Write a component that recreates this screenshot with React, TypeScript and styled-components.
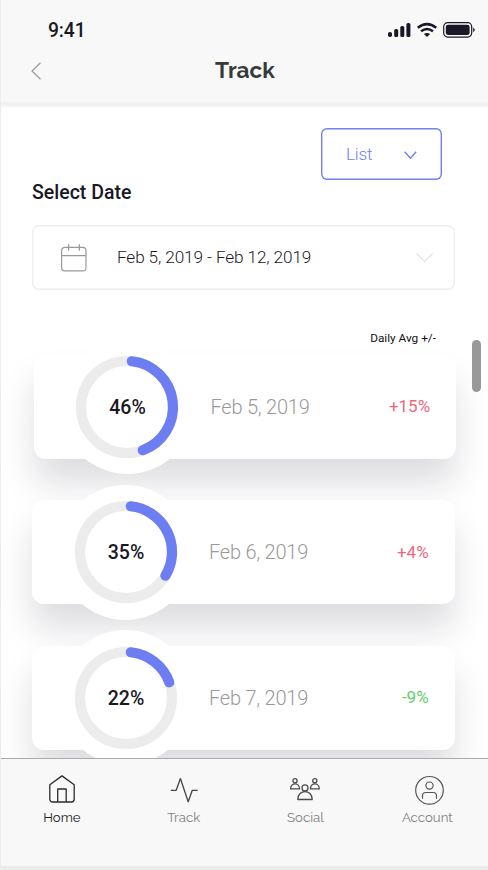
import React from "react";
import styled, { createGlobalStyle } from "styled-components";

const Global = createGlobalStyle`
  * { box-sizing: border-box; }
  body { margin: 0; background: #ececec; font-family: Roboto, sans-serif; color: #1a1827; }
  svg { display: block; overflow: visible; flex: none; }
`;

const Screen = styled.div`
  position: relative;
  display: flex;
  flex-direction: column;
  width: 488px;
  height: 870px;
  padding: 0 0 4px 1px;
  overflow: hidden;
  background: #ececec;
`;

const Header = styled.header`
  flex: none;
  height: 102px;
  background: #f8f8f8;
`;

const HeaderEdge = styled.div`
  flex: none;
  height: 6px;
  background: linear-gradient(#f2f2f2 0 55%, #fff);
`;

const StatusBar = styled.div`
  display: flex;
  justify-content: space-between;
  align-items: center;
  height: 60px;
  padding: 0 13px 0 47px;
`;

const Clock = styled.span`
  padding-top: 2px;
  font-size: 19.3px;
  font-weight: 500;
  letter-spacing: -0.1px;
  line-height: 24px;
`;

const StatusIcons = styled.div`
  display: flex;
  align-items: center;
`;

const TitleBar = styled.div`
  display: grid;
  grid-template-columns: 60px 1fr 60px;
  grid-template-rows: 21px;
  align-items: center;
  height: 21px;
`;

const BackButton = styled.div`
  padding-left: 30px;
`;

const Title = styled.h1`
  margin: -1px 0 0 1px;
  text-align: center;
  font: 700 22.6px/24px Raleway, Lato, sans-serif;
  color: #373a38;
`;

const Main = styled.main`
  flex: 1;
  min-height: 0;
  overflow: hidden;
  padding: 19.5px 0 0 31px;
  background: #fff;
`;

const ViewSelect = styled.div`
  display: flex;
  align-items: center;
  justify-content: space-between;
  width: 121px;
  height: 52.5px;
  margin-left: 289px;
  padding: 0 25px 0 25px;
  box-shadow: inset 0 0 0 1.4px #7080f0;
  border-radius: 6px;
  color: #7080f0;
  font-size: 17.2px;
  letter-spacing: -0.2px;
  font-weight: 300;
`;

const SelectChevron = styled.div`
  padding-top: 2px;
`;

const SectionLabel = styled.h2`
  margin: 1px 0 20px;
  font-size: 19.5px;
  font-weight: 500;
  line-height: 24px;
`;

const DateField = styled.div`
  display: flex;
  align-items: center;
  width: 423px;
  height: 65px;
  padding: 0 22.5px 0 29px;
  box-shadow: inset 0 0 0 1.4px #eee;
  border-radius: 7px;
`;

const DateText = styled.span`
  flex: 1;
  margin: -2px 0 0 30px;
  font-size: 17.2px;
  letter-spacing: -0.12px;
  font-weight: 300;
`;

const ColumnLabel = styled.div`
  width: 404px;
  height: 16px;
  margin-top: 40px;
  text-align: right;
  font-size: 11.8px;
  line-height: 16px;
  color: #111;
`;

const CardList = styled.div`
  display: flex;
  flex-direction: column;
  gap: 41.5px;
  padding-top: 8.6px;
`;

const Card = styled.article<{ $shift?: number }>`
  display: flex;
  align-items: center;
  width: 422.6px;
  height: 104px;
  margin-left: ${(p) => p.$shift ?? 0}px;
  padding: 0 26px;
  border-radius: 12px;
  background: #fff;
  box-shadow: 0 25px 34px -1px rgba(28, 22, 50, 0.15);
`;

const Halo = styled.div`
  display: grid;
  place-items: center;
  flex: none;
  width: 135px;
  height: 135px;
  border-radius: 50%;
  background: #fff;
`;

const RingSvg = styled.svg`
  grid-area: 1 / 1;
`;

const Percent = styled.span`
  grid-area: 1 / 1;
  padding: 2px 0 0 1px;
  font-size: 19.5px;
  font-weight: 500;
  line-height: 24px;
`;

const Day = styled.span`
  flex: 1;
  margin-left: 16px;
  font-size: 20px;
  letter-spacing: -0.22px;
  font-weight: 300;
  color: #999;
`;

const Delta = styled.span<{ $up: boolean }>`
  margin-top: -1px;
  font-size: 17px;
  color: ${(p) => (p.$up ? "#ee687c" : "#5fcf6b")};
`;

const ScrollThumb = styled.div`
  position: absolute;
  top: 339.5px;
  right: 7px;
  width: 9px;
  height: 52px;
  border-radius: 5px;
  background: #999;
`;

const Nav = styled.nav`
  display: grid;
  grid-template-columns: repeat(4, 121.8px);
  flex: none;
  height: 108px;
  border-top: 1px solid #aaa;
  background: #f8f8f8;
`;

const NavItem = styled.div<{ $active?: boolean }>`
  display: flex;
  flex-direction: column;
  align-items: center;
  padding-top: 16px;
  font: 400 13.2px/20px Raleway, Lato, sans-serif;
  color: ${(p) => (p.$active ? "#222" : "#808080")};
`;

const NavLabel = styled.span`
  margin-top: 4.5px;
`;

const NavIcon = styled.div<{ $nudge: number }>`
  padding-left: ${(p) => p.$nudge * 2}px;
`;

const polar = (deg: number) => {
  const a = (deg * Math.PI) / 180;
  return `${51 + 46 * Math.sin(a)} ${51 - 46 * Math.cos(a)}`;
};

const Ring = ({ end }: { end: number }) => (
  <RingSvg width="102" height="102" viewBox="0 0 102 102" fill="none" strokeWidth="10.2">
    <circle cx="51" cy="51" r="46" stroke="#ececec" />
    <path d={`M${polar(6)} A46 46 0 0 1 ${polar(end)}`} stroke="#6c7ef1" strokeLinecap="round" />
  </RingSvg>
);

const Signal = () => (
  <svg width="23" height="14" viewBox="0 0 23 14" fill="#1a1827">
    <rect x="0" y="9" width="4" height="5" rx="1.8" />
    <rect x="6.2" y="6" width="4" height="8" rx="1.6" />
    <rect x="12.3" y="3" width="4" height="11" rx="1.6" />
    <rect x="18.4" y="0" width="4" height="14" rx="1.6" />
  </svg>
);

const Wifi = () => (
  <svg width="20" height="14" viewBox="0 0 20 14" fill="none" stroke="#1a1827" strokeWidth="2.5">
    <path d="M.8 4.7Q10-2.5 19.2 4.7" />
    <path d="M4 8.2Q10 3.7 16 8.2" />
    <path d="M6.9 10.9Q10 8.9 13.1 10.9L10 14Z" fill="#1a1827" stroke="none" />
  </svg>
);

const Battery = () => (
  <svg width="32" height="16" viewBox="0 0 32 16">
    <rect x=".7" y=".7" width="28" height="14.4" rx="4" fill="none" stroke="#1a1827" strokeWidth="1.2" />
    <rect x="2.8" y="2.7" width="23.8" height="10.4" rx="2.4" fill="#1a1827" />
    <path d="M30.2 5.6q3.2 2.3 0 4.6Z" fill="#1a1827" />
  </svg>
);

const SpacedIcon = styled.div<{ $gap: number }>`
  margin-left: ${(p) => p.$gap}px;
`;

const Calendar = () => (
  <svg width="26" height="28" viewBox="0 0 26 28" fill="none" stroke="#999" strokeWidth="1.2">
    <rect x=".6" y="3.3" width="24.4" height="23.6" rx="3.2" />
    <path d="M.6 11.7H25M7.6 .2V6.7M18.4 .2V6.7" />
  </svg>
);

const Home = () => (
  <svg width="26" height="28" viewBox="0 0 26 28" fill="none" stroke="#2b2b2b" strokeWidth="1.3" strokeLinejoin="round">
    <path d="M.8 9.7 13 .9 25.2 9.7V24.2A2.8 2.8 0 0 1 22.4 27H3.6A2.8 2.8 0 0 1 .8 24.2Z" />
    <path d="M8.7 27V14h8.5v13" />
  </svg>
);

const Pulse = () => (
  <svg width="28" height="28" viewBox="0 0 28 28" fill="none" stroke="#444" strokeWidth="1.3" strokeLinejoin="round">
    <path d="M.8 15.3H6.2L10.4 3.5 18.2 26.7 22.3 15.3H27.7" />
  </svg>
);

const Social = () => (
  <svg width="30" height="28" viewBox="0 0 30 28" fill="none" stroke="#4b4b4b" strokeWidth="1.3" strokeLinejoin="round">
    <circle cx="5" cy="5.7" r="2.1" />
    <circle cx="24.8" cy="5.7" r="2.1" />
    <path d="M.6 13.9H9.5C9.5 7.2.6 7.2.6 13.9Z" />
    <path d="M20.4 13.9H29.3C29.3 7.2 20.4 7.2 20.4 13.9Z" />
    <circle cx="15" cy="12.9" r="3" />
    <path d="M7.8 24.5H22.2C22.2 13.9 7.8 13.9 7.8 24.5Z" />
  </svg>
);

const Account = () => (
  <svg width="29" height="28" viewBox="0 0 29 28" fill="none" stroke="#555" strokeWidth="1.2">
    <circle cx="14.5" cy="15.3" r="13.8" />
    <circle cx="14.5" cy="10.6" r="3.6" />
    <path d="M7.5 23.7V20.8Q7.5 17.5 10.8 17.5H18.2Q21.5 17.5 21.5 20.8V23.7" />
  </svg>
);

const days = [
  { percent: "46%", date: "Feb 5, 2019", delta: "+15%", up: true, end: 160, shift: 1.5 },
  { percent: "35%", date: "Feb 6, 2019", delta: "+4%", up: true, end: 121, shift: 0 },
  { percent: "22%", date: "Feb 7, 2019", delta: "-9%", up: false, end: 70, shift: 0 },
];

const tabs = [
  { label: "Home", icon: <Home />, active: true, nudge: 0 },
  { label: "Track", icon: <Pulse />, nudge: 0.5 },
  { label: "Social", icon: <Social />, nudge: 0 },
  { label: "Account", icon: <Account />, nudge: 1.8 },
];

export default function App() {
  return (
    <>
      <Global />
      <Screen>
        <Header>
          <StatusBar>
            <Clock>9:41</Clock>
            <StatusIcons>
              <Signal />
              <SpacedIcon $gap={6}><Wifi /></SpacedIcon>
              <SpacedIcon $gap={6}><Battery /></SpacedIcon>
            </StatusIcons>
          </StatusBar>
          <TitleBar>
            <BackButton>
              <svg width="10" height="18" viewBox="0 0 10 18" fill="none" stroke="#999" strokeWidth="1.2">
                <path d="M9.5 .8 1 9l8.5 8.2" />
              </svg>
            </BackButton>
            <Title>Track</Title>
          </TitleBar>
        </Header>
        <HeaderEdge />
        <Main>
          <ViewSelect>
            List
            <SelectChevron>
              <svg width="13" height="8" viewBox="0 0 13 8" fill="none" stroke="#7080f0" strokeWidth="1.4">
                <path d="M.7 .7 6.4 7.2 12.2 .7" />
              </svg>
            </SelectChevron>
          </ViewSelect>
          <SectionLabel>Select Date</SectionLabel>
          <DateField>
            <Calendar />
            <DateText>Feb 5, 2019 - Feb 12, 2019</DateText>
            <svg width="17" height="9" viewBox="0 0 17 9" fill="none" stroke="#e2e2e2" strokeWidth="1.2">
              <path d="M.4 .4 8.5 8.4 16.6 .4" />
            </svg>
          </DateField>
          <ColumnLabel>Daily Avg +/-</ColumnLabel>
          <CardList>
            {days.map((d) => (
              <Card key={d.date} $shift={d.shift}>
                <Halo>
                  <Ring end={d.end} />
                  <Percent>{d.percent}</Percent>
                </Halo>
                <Day>{d.date}</Day>
                <Delta $up={d.up}>{d.delta}</Delta>
              </Card>
            ))}
          </CardList>
        </Main>
        <Nav>
          {tabs.map((t) => (
            <NavItem key={t.label} $active={t.active}>
              <NavIcon $nudge={t.nudge}>{t.icon}</NavIcon>
              <NavLabel>{t.label}</NavLabel>
            </NavItem>
          ))}
        </Nav>
        <ScrollThumb />
      </Screen>
    </>
  );
}
